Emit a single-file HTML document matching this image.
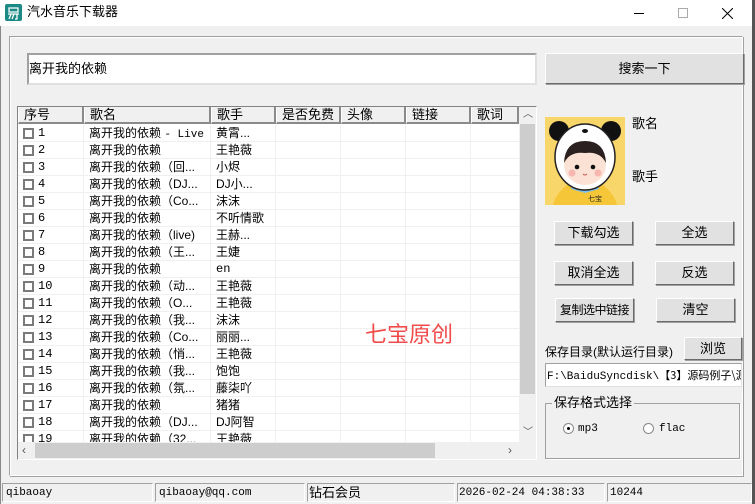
<!DOCTYPE html>
<html><head><meta charset="utf-8"><style>
*{margin:0;padding:0;box-sizing:border-box}
body{width:755px;height:504px;background:#f0f0f0;position:relative;overflow:hidden;font-family:"Liberation Sans","Noto Sans CJK SC",sans-serif;font-size:12px;color:#000}
.a{position:absolute}
.t{white-space:nowrap;line-height:16px}
.btn{position:absolute;background:#e1e1e1;border:1px solid #fff;border-right-color:#6a6a6a;border-bottom-color:#6a6a6a;box-shadow:1px 1px 0 #a0a0a0;text-align:center;font-size:12px;white-space:nowrap}
.inp{position:absolute;background:#fff;border:1px solid #a0a0a0;border-right-color:#e0e0e0;border-bottom-color:#e0e0e0}
.mono{font-family:"Liberation Mono","Noto Sans CJK SC",monospace;font-size:11px}
.row{position:absolute;left:0;height:17px;width:501px;border-bottom:1px solid #f0f0f0}
.cb{position:absolute;left:5px;top:3px;width:11px;height:11px;border:2px solid #7a7a7a;background:#fff}
.cell{position:absolute;top:0;line-height:16px;white-space:nowrap;font-size:12px}
.vl{position:absolute;top:0;width:1px;height:335px;background:#f0f0f0}
.hd{position:absolute;top:0;height:17px;border-right:2px solid #8a8a8a;border-bottom:2px solid #8a8a8a;border-left:1px solid #fff;line-height:15px;padding-left:5px;font-size:13px}
</style></head><body>
<div class="a" style="left:0;top:0;width:755px;height:26px;background:#fff"></div>
<div class="a" style="left:5px;top:4px;width:17px;height:17px;background:#1b8a86;border-radius:2px"><svg width="17" height="17"><path d="M4 4h9v4H4zM3 10h11M6 10l-2 5M9 10l-2 5M12 10v5h-2" stroke="#fff" stroke-width="1.3" fill="none"/></svg></div>
<div class="a t" style="left:27px;top:4px;font-size:13px">汽水音乐下载器</div>
<div class="a" style="left:634px;top:13px;width:10px;height:1px;background:#000"></div>
<div class="a" style="left:678px;top:8px;width:10px;height:10px;border:1px solid #aaa"></div>
<svg class="a" style="left:722px;top:8px" width="11" height="11"><path d="M0 0L11 11M11 0L0 11" stroke="#000" stroke-width="1"/></svg>
<div class="a" style="left:0;top:26px;width:1px;height:478px;background:#888"></div>
<div class="a" style="left:752px;top:0;width:3px;height:504px;background:#555"></div>
<div class="a" style="left:9px;top:36px;width:734px;height:440px;border:1px solid #a0a0a0;border-right-color:#fff;border-bottom-color:#fff;box-shadow:inset 1px 1px 0 #fff,1px 1px 0 #a0a0a0"></div>
<div class="inp" style="left:27px;top:53px;width:510px;height:32px;border-width:2px"></div>
<div class="a t" style="left:29px;top:61px;font-size:13px">离开我的依赖</div>
<div class="btn" style="left:545px;top:53px;width:199px;height:31px;line-height:29px;font-size:13px">搜索一下</div>
<div class="a" style="left:17px;top:106px;width:520px;height:354px;border:1px solid #828282;border-right-color:#fff;border-bottom-color:#fff;background:#fff;overflow:hidden">
 <div class="a" style="left:0;top:0;width:501px;height:17px;background:#f0f0f0">
  <div class="hd" style="left:0;width:66px">序号</div>
  <div class="hd" style="left:66px;width:127px">歌名</div>
  <div class="hd" style="left:193px;width:65px">歌手</div>
  <div class="hd" style="left:258px;width:65px">是否免费</div>
  <div class="hd" style="left:323px;width:65px">头像</div>
  <div class="hd" style="left:388px;width:65px">链接</div>
  <div class="hd" style="left:453px;width:48px">歌词</div>
 </div>
 <div class="a" style="left:0;top:18px;width:501px;height:317px;overflow:hidden">
  <div class="vl" style="left:65px"></div><div class="vl" style="left:192px"></div><div class="vl" style="left:257px"></div><div class="vl" style="left:322px"></div><div class="vl" style="left:387px"></div><div class="vl" style="left:452px"></div>
  <div class="row" style="top:0"><div class="cb"></div><div class="cell mono" style="left:20px">1</div><div class="cell" style="left:71px">离开我的依赖 <span class="mono">- Live</span></div><div class="cell" style="left:198px">黄霄...</div></div>
  <div class="row" style="top:17px"><div class="cb"></div><div class="cell mono" style="left:20px">2</div><div class="cell" style="left:71px">离开我的依赖</div><div class="cell" style="left:198px">王艳薇</div></div>
  <div class="row" style="top:34px"><div class="cb"></div><div class="cell mono" style="left:20px">3</div><div class="cell" style="left:71px">离开我的依赖（回...</div><div class="cell" style="left:198px">小烬</div></div>
  <div class="row" style="top:51px"><div class="cb"></div><div class="cell mono" style="left:20px">4</div><div class="cell" style="left:71px">离开我的依赖（DJ...</div><div class="cell" style="left:198px">DJ小...</div></div>
  <div class="row" style="top:68px"><div class="cb"></div><div class="cell mono" style="left:20px">5</div><div class="cell" style="left:71px">离开我的依赖（Co...</div><div class="cell" style="left:198px">沫沫</div></div>
  <div class="row" style="top:85px"><div class="cb"></div><div class="cell mono" style="left:20px">6</div><div class="cell" style="left:71px">离开我的依赖</div><div class="cell" style="left:198px">不听情歌</div></div>
  <div class="row" style="top:102px"><div class="cb"></div><div class="cell mono" style="left:20px">7</div><div class="cell" style="left:71px">离开我的依赖（live)</div><div class="cell" style="left:198px">王赫...</div></div>
  <div class="row" style="top:119px"><div class="cb"></div><div class="cell mono" style="left:20px">8</div><div class="cell" style="left:71px">离开我的依赖（王...</div><div class="cell" style="left:198px">王婕</div></div>
  <div class="row" style="top:136px"><div class="cb"></div><div class="cell mono" style="left:20px">9</div><div class="cell" style="left:71px">离开我的依赖</div><div class="cell mono" style="left:198px">en</div></div>
  <div class="row" style="top:153px"><div class="cb"></div><div class="cell mono" style="left:20px">10</div><div class="cell" style="left:71px">离开我的依赖（动...</div><div class="cell" style="left:198px">王艳薇</div></div>
  <div class="row" style="top:170px"><div class="cb"></div><div class="cell mono" style="left:20px">11</div><div class="cell" style="left:71px">离开我的依赖（O...</div><div class="cell" style="left:198px">王艳薇</div></div>
  <div class="row" style="top:187px"><div class="cb"></div><div class="cell mono" style="left:20px">12</div><div class="cell" style="left:71px">离开我的依赖（我...</div><div class="cell" style="left:198px">沫沫</div></div>
  <div class="row" style="top:204px"><div class="cb"></div><div class="cell mono" style="left:20px">13</div><div class="cell" style="left:71px">离开我的依赖（Co...</div><div class="cell" style="left:198px">丽丽...</div></div>
  <div class="row" style="top:221px"><div class="cb"></div><div class="cell mono" style="left:20px">14</div><div class="cell" style="left:71px">离开我的依赖（悄...</div><div class="cell" style="left:198px">王艳薇</div></div>
  <div class="row" style="top:238px"><div class="cb"></div><div class="cell mono" style="left:20px">15</div><div class="cell" style="left:71px">离开我的依赖（我...</div><div class="cell" style="left:198px">饱饱</div></div>
  <div class="row" style="top:255px"><div class="cb"></div><div class="cell mono" style="left:20px">16</div><div class="cell" style="left:71px">离开我的依赖（氛...</div><div class="cell" style="left:198px">藤柒吖</div></div>
  <div class="row" style="top:272px"><div class="cb"></div><div class="cell mono" style="left:20px">17</div><div class="cell" style="left:71px">离开我的依赖</div><div class="cell" style="left:198px">猪猪</div></div>
  <div class="row" style="top:289px"><div class="cb"></div><div class="cell mono" style="left:20px">18</div><div class="cell" style="left:71px">离开我的依赖（DJ...</div><div class="cell" style="left:198px">DJ阿智</div></div>
  <div class="row" style="top:306px"><div class="cb"></div><div class="cell mono" style="left:20px">19</div><div class="cell" style="left:71px">离开我的依赖（32...</div><div class="cell" style="left:198px">王艳薇</div></div>
 </div>
 <div class="a" style="left:501px;top:0;width:17px;height:335px;background:#f0f0f0"></div>
 <div class="a t" style="left:505px;top:0;font-size:10px;color:#555">︿</div>
 <div class="a" style="left:502px;top:17px;width:15px;height:270px;background:#cdcdcd"></div>
 <div class="a t" style="left:505px;top:318px;font-size:10px;color:#555">﹀</div>
 <div class="a" style="left:0;top:335px;width:518px;height:17px;background:#f0f0f0"></div>
 <div class="a t" style="left:4px;top:335px;font-size:12px;color:#555">‹</div>
 <div class="a" style="left:17px;top:336px;width:400px;height:15px;background:#cdcdcd"></div>
 <div class="a t" style="left:490px;top:335px;font-size:12px;color:#555">›</div>
</div>
<div class="a t" style="left:365px;top:322px;font-size:22px;line-height:26px;color:#f24b4b">七宝原创</div>
<svg class="a" style="left:545px;top:117px" width="80" height="88" viewBox="0 0 80 88">
<rect width="80" height="88" fill="#f9d66a"/>
<circle cx="14" cy="14" r="10" fill="#111"/><circle cx="66" cy="14" r="10" fill="#111"/>
<path d="M22 68 Q10 78 8 88 H72 Q70 78 58 68Z" fill="#f5c637"/>
<path d="M28 66 L40 72 L52 66 L54 72 L40 76 L26 72Z" fill="#7fc0e8"/>
<ellipse cx="40" cy="40" rx="30" ry="33" fill="#fff" stroke="#222" stroke-width="1.5"/>
<ellipse cx="40" cy="48" rx="21" ry="20" fill="#fbe2d4"/>
<path d="M19 46 Q20 24 40 24 Q60 24 61 46 Q55 34 40 36 Q25 34 19 46Z" fill="#2b2020"/>
<circle cx="32" cy="50" r="2.3" fill="#111"/><circle cx="48" cy="50" r="2.3" fill="#111"/>
<circle cx="27" cy="56" r="3.5" fill="#f7b7b0"/><circle cx="53" cy="56" r="3.5" fill="#f7b7b0"/>
<path d="M38 57 Q40 59 42 57" stroke="#c55" fill="none"/>
<ellipse cx="40" cy="14" rx="3" ry="2" fill="#111"/>
<text x="43" y="84" font-size="7" fill="#222" font-family="Noto Sans CJK SC">七宝</text>
</svg>
<div class="a t" style="left:632px;top:116px;font-size:13px">歌名</div>
<div class="a t" style="left:632px;top:169px;font-size:13px">歌手</div>
<div class="btn" style="left:554px;top:221px;width:79px;height:24px;line-height:22px;font-size:13px">下载勾选</div>
<div class="btn" style="left:655px;top:221px;width:79px;height:24px;line-height:22px;font-size:13px">全选</div>
<div class="btn" style="left:554px;top:261px;width:79px;height:24px;line-height:22px;font-size:13px">取消全选</div>
<div class="btn" style="left:655px;top:261px;width:79px;height:24px;line-height:22px;font-size:13px">反选</div>
<div class="btn" style="left:555px;top:298px;width:79px;height:24px;line-height:22px;letter-spacing:-0.5px">复制选中链接</div>
<div class="btn" style="left:656px;top:298px;width:79px;height:24px;line-height:22px;font-size:13px">清空</div>
<div class="a t" style="left:545px;top:344px;font-size:12px">保存目录(默认运行目录)</div>
<div class="btn" style="left:684px;top:337px;width:58px;height:23px;line-height:21px;font-size:13px">浏览</div>
<div class="inp" style="left:545px;top:363px;width:197px;height:24px;overflow:hidden"><div class="t mono" style="position:absolute;left:1px;top:3px">F:\BaiduSyncdisk\<span style="font-family:'Noto Sans CJK SC'">【3】源码例子\源</span></div></div>
<div class="a" style="left:545px;top:403px;width:195px;height:56px;border:1px solid #a0a0a0;box-shadow:1px 1px 0 #fff"></div>
<div class="a t" style="left:552px;top:395px;background:#f0f0f0;padding:0 2px;font-size:13px">保存格式选择</div>
<div class="a" style="left:563px;top:423px;width:11px;height:11px;border-radius:50%;border:1px solid #888;background:#fff"><div style="position:absolute;left:3px;top:3px;width:3px;height:3px;border-radius:50%;background:#000"></div></div>
<div class="a t mono" style="left:578px;top:421px">mp3</div>
<div class="a" style="left:643px;top:423px;width:11px;height:11px;border-radius:50%;border:1px solid #888;background:#fff"></div>
<div class="a t mono" style="left:659px;top:421px">flac</div>
<div class="a" style="left:1px;top:478px;width:751px;height:26px;background:#f0f0f0"></div>
<div class="a t mono" style="left:2px;top:483px;width:151px;height:19px;border:1px solid #a0a0a0;border-right-color:#fff;border-bottom-color:#fff;padding:1px 3px">qibaoay</div>
<div class="a t mono" style="left:155px;top:483px;width:150px;height:19px;border:1px solid #a0a0a0;border-right-color:#fff;border-bottom-color:#fff;padding:1px 3px">qibaoay@qq.com</div>
<div class="a t" style="left:307px;top:483px;width:148px;height:19px;border:1px solid #a0a0a0;border-right-color:#fff;border-bottom-color:#fff;padding:1px 1px;font-size:13px">钻石会员</div>
<div class="a t mono" style="left:457px;top:483px;width:148px;height:19px;border:1px solid #a0a0a0;border-right-color:#fff;border-bottom-color:#fff;padding:1px 1px">2026-02-24 04:38:33</div>
<div class="a t mono" style="left:607px;top:483px;width:145px;height:19px;border:1px solid #a0a0a0;border-right-color:#fff;border-bottom-color:#fff;padding:1px 2px">10244</div>
</body></html>
